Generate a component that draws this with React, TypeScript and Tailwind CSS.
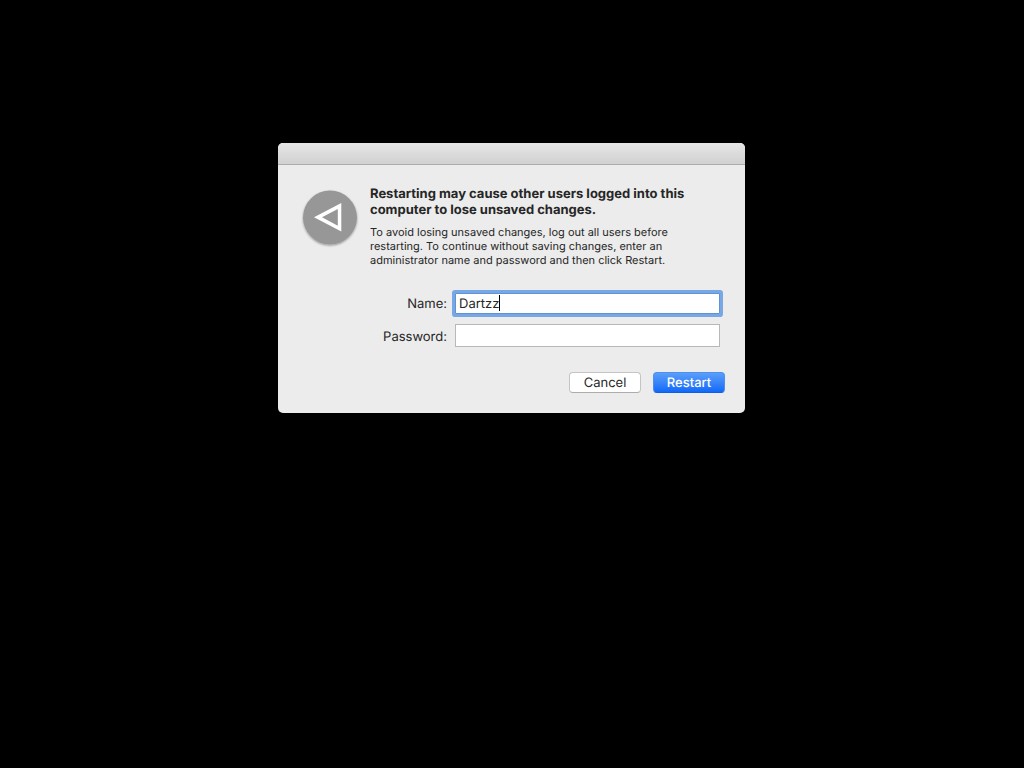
import { useState } from "react";

function AlertIcon() {
  return (
    <svg viewBox="0 0 60 60" className="mt-0.5 h-[60px] w-[60px] shrink-0" aria-hidden="true">
      <defs>
        <filter id="badge-shadow" x="-10%" y="-10%" width="120%" height="125%">
          <feDropShadow dx="0" dy="1" stdDeviation="0.9" floodColor="#000" floodOpacity="0.4" />
        </filter>
      </defs>
      <circle cx="30" cy="29.5" r="27" fill="#979797" filter="url(#badge-shadow)" />
      <path fillRule="evenodd" fill="#fff" d="M14 29.3 L41.3 15 V43.6 Z M22 29.3 L37.8 37.8 V20.9 Z" />
    </svg>
  );
}

export default function App() {
  const [name, setName] = useState("Dartzz");
  const [password, setPassword] = useState("");

  return (
    <main className="flex min-h-screen items-start justify-center bg-black px-4 pt-[143px] pr-[17px] font-['Inter','Liberation_Sans',sans-serif] text-[#262626] [text-rendering:geometricPrecision]">
      <form
        role="dialog"
        aria-labelledby="dialog-title"
        onSubmit={(event) => event.preventDefault()}
        className="w-full max-w-[467px] overflow-hidden rounded-[5px] bg-[#ececec]"
      >
        <header className="h-[22px] border-b border-[#acacac] bg-linear-to-b from-[#e6e6e6] to-[#d1d1d1]" />
        <div className="flex gap-[10px] pt-[21px] pr-5 pl-[22px]">
          <AlertIcon />
          <div>
            <h1 id="dialog-title" className="text-[13px] leading-4 font-bold">
              Restarting may cause other users logged into this
              <br />
              computer to lose unsaved changes.
            </h1>
            <p className="mt-[7px] text-[11px] leading-[14px]">
              To avoid losing unsaved changes, log out all users before
              <br />
              restarting. To continue without saving changes, enter an
              <br />
              administrator name and password and then click Restart.
            </p>
          </div>
        </div>
        <div className="mt-[26px] grid grid-cols-[169px_1fr] items-center gap-x-2 gap-y-[10px] pr-[25px] text-[13px]">
          <label htmlFor="name" className="text-right leading-5">
            Name:
          </label>
          <div className="relative">
            <input
              id="name"
              value={name}
              onChange={(event) => setName(event.target.value)}
              className="block h-[21px] w-full rounded-[1px] border border-[#5f93d6] bg-white px-[3px] leading-4 ring-3 ring-[#78a7e6] outline-none [text-rendering:inherit]"
            />
            <span className="absolute top-[2px] left-[44px] h-4 w-px bg-black" />
          </div>
          <label htmlFor="password" className="pt-[3px] text-right leading-5">
            Password:
          </label>
          <input
            id="password"
            type="password"
            value={password}
            onChange={(event) => setPassword(event.target.value)}
            className="block h-[23px] w-full border border-[#b8b8b8] bg-white px-[3px] outline-none"
          />
        </div>
        <div className="flex justify-end gap-3 pt-[25px] pr-5 pb-5 text-[13px]">
          <button
            type="button"
            className="h-[21px] w-[72px] rounded-[4px] border border-[#c4c4c4] border-b-[#acacac] bg-white pt-0.5 leading-none [text-rendering:inherit]"
          >
            Cancel
          </button>
          <button
            type="submit"
            className="h-[21px] w-[72px] rounded-[4px] border border-[#4b8ff2] border-b-[#0f5fe6] bg-linear-to-b from-[#5a9ef8] to-[#1068f8] pt-0.5 leading-none font-medium text-white [text-rendering:inherit]"
          >
            Restart
          </button>
        </div>
      </form>
    </main>
  );
}
